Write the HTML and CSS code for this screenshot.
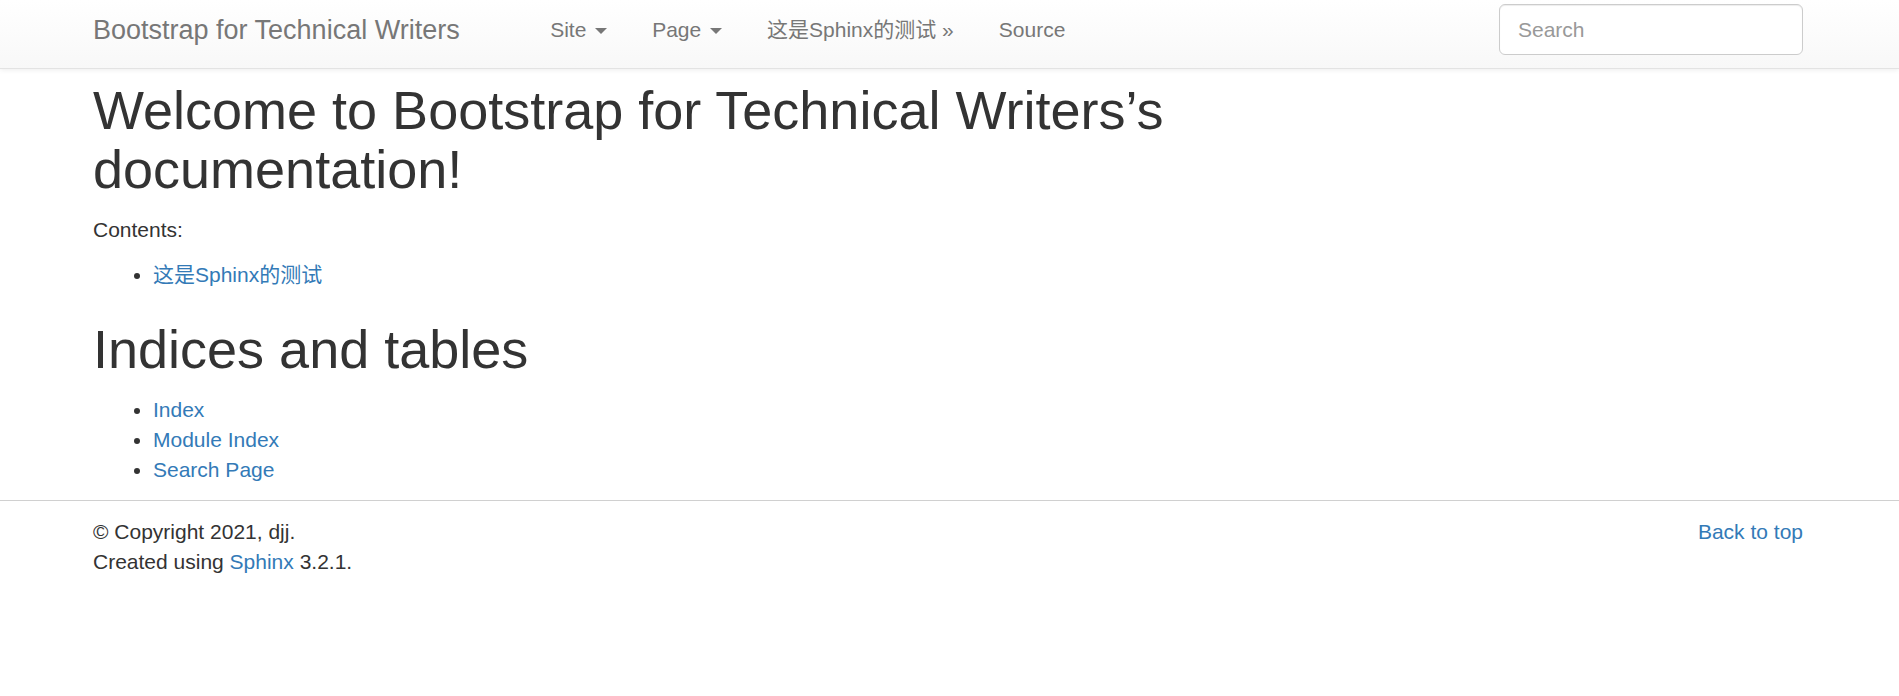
FILE: index.html
```html
<!DOCTYPE html>
<html lang="en">
<head>
<meta charset="utf-8">
<title>Welcome to Bootstrap for Technical Writers’s documentation!</title>
<link rel="stylesheet" href="styles.css">
</head>
<body>
<header class="navbar">
  <div class="container navbar-inner">
    <a class="brand" href="#">Bootstrap for Technical Writers</a>
    <ul class="nav">
      <li><a href="#">Site <span class="caret"></span></a></li>
      <li><a href="#">Page <span class="caret"></span></a></li>
      <li><a href="#">这是Sphinx的测试 &raquo;</a></li>
      <li><a href="#">Source</a></li>
    </ul>
    <form class="search-form">
      <input class="search-input" type="text" placeholder="Search">
    </form>
  </div>
</header>

<main class="container content">
  <section class="section">
    <h1 class="title first">Welcome to Bootstrap for Technical Writers’s documentation!</h1>
    <p class="caption">Contents:</p>
    <ul class="list">
      <li><a href="#">这是Sphinx的测试</a></li>
    </ul>
  </section>
  <section class="section">
    <h1 class="title second">Indices and tables</h1>
    <ul class="list">
      <li><a href="#">Index</a></li>
      <li><a href="#">Module Index</a></li>
      <li><a href="#">Search Page</a></li>
    </ul>
  </section>
</main>

<footer class="footer">
  <div class="container footer-inner">
    <div class="footer-text">
      <p>&copy; Copyright 2021, djj.</p>
      <p>Created using <a href="#">Sphinx</a> 3.2.1.</p>
    </div>
    <a class="back-top" href="#">Back to top</a>
  </div>
</footer>
</body>
</html>
```

FILE: styles.css
```css
html, body {
  margin: 0;
  padding: 0;
  background: #fff;
}

body {
  font-family: "Liberation Sans", Arial, "Noto Sans CJK SC", sans-serif;
  font-size: 21px;
  line-height: 30px;
  color: #333;
}

a {
  color: #337ab7;
  text-decoration: none;
}

.container {
  box-sizing: border-box;
  max-width: 1713px;
  padding-right: 3px;
  margin: 0 auto;
}

/* Navbar */
.navbar {
  height: 68px;
  background: linear-gradient(to bottom, #ffffff 0%, #f8f8f8 100%);
  border-bottom: 1px solid #e3e3e3;
  box-shadow: 0 1px 5px rgba(0, 0, 0, 0.075);
}

.navbar-inner {
  display: flex;
  align-items: flex-start;
  height: 68px;
}

.brand {
  display: block;
  font-size: 27px;
  line-height: 30px;
  padding-top: 15px;
  color: #777;
  white-space: nowrap;
}

.nav {
  display: flex;
  list-style: none;
  margin: 0 0 0 68px;
  padding: 0;
}

.nav a {
  display: block;
  padding: 15px 22.5px 0;
  line-height: 30px;
  color: #777;
  white-space: nowrap;
}

.caret {
  display: inline-block;
  width: 0;
  height: 0;
  margin-left: 3px;
  vertical-align: middle;
  border-top: 6px solid #777;
  border-left: 6px solid transparent;
  border-right: 6px solid transparent;
}

.search-form {
  margin: 4px 0 0 auto;
}

.search-input {
  box-sizing: border-box;
  display: block;
  width: 304px;
  height: 51px;
  padding: 9px 18px;
  font-family: "Liberation Sans", Arial, sans-serif;
  font-size: 21px;
  color: #555;
  background: #fff;
  border: 1px solid #ccc;
  border-radius: 6px;
  box-shadow: inset 0 1px 1px rgba(0, 0, 0, 0.075);
  outline: none;
}

.search-input::placeholder {
  color: #999;
}

/* Content */
.title {
  font-size: 54px;
  line-height: 59.4px;
  font-weight: 500;
  margin: 30px 0 15px;
  max-width: 1270px;
  color: #333;
}

.title.first {
  margin-top: 12px;
}

.title.second {
  margin-bottom: 16px;
}

.caption {
  margin: 0 0 15px;
}

.list {
  margin: 0 0 15px;
  padding-left: 60px;
}

/* Footer */
.footer {
  border-top: 1px solid #d0d0d0;
  padding-top: 16px;
}

.footer-inner {
  display: flex;
  justify-content: space-between;
  align-items: flex-start;
}

.footer-text p {
  margin: 0;
}
```
